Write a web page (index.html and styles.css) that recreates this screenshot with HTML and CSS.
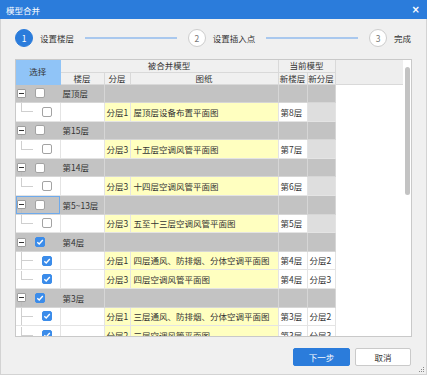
FILE: index.html
```html
<!DOCTYPE html>
<html lang="zh">
  <head>
    <meta charset="UTF-8" />
    <title>模型合并</title>
    <link rel="stylesheet" href="styles.css">
  </head>
  <body>
    <section class="dialog">
      <header class="titlebar">
        <span class="title">模型合并</span>
        <span class="close">×</span>
      </header>

      <div class="dialog-body">
        <nav class="steps">
          <span class="step-num active">1</span>
          <span class="step-text">设置楼层</span>
          <span class="step-line"></span>
          <span class="step-num">2</span>
          <span class="step-text">设置插入点</span>
          <span class="step-line"></span>
          <span class="step-num">3</span>
          <span class="step-text">完成</span>
        </nav>

        <div class="grid-box">
          <div class="grid-scroll">
            <table class="grid">
              <colgroup>
                <col class="c-sel">
                <col class="c-floor">
                <col class="c-layer">
                <col class="c-draw">
                <col class="c-nfloor">
                <col class="c-nlayer">
                <col>
              </colgroup>
              <thead>
                <tr>
                  <th rowspan="2" class="sel-head">选择</th>
                  <th colspan="3">被合并模型</th>
                  <th colspan="2">当前模型</th>
                  <th rowspan="2" class="filler"></th>
                </tr>
                <tr>
                  <th>楼层</th>
                  <th>分层</th>
                  <th>图纸</th>
                  <th>新楼层</th>
                  <th>新分层</th>
                </tr>
              </thead>
              <tbody>
                <tr class="group">
                  <td class="sel"><div class="node"><span class="toggle"></span><span class="cb"></span></div></td>
                  <td class="floor">屋顶层</td><td colspan="2"></td><td></td><td></td><td class="filler"></td>
                </tr>
                <tr class="child">
                  <td class="sel"><div class="leaf"><span class="branch"></span><span class="cb"></span></div></td>
                  <td></td><td class="y">分层1</td><td class="y draw">屋顶层设备布置平面图</td><td class="nf">第8层</td><td class="empty"></td><td class="filler"></td>
                </tr>
                <tr class="group">
                  <td class="sel"><div class="node"><span class="toggle"></span><span class="cb"></span></div></td>
                  <td class="floor">第15层</td><td colspan="2"></td><td></td><td></td><td class="filler"></td>
                </tr>
                <tr class="child">
                  <td class="sel"><div class="leaf"><span class="branch"></span><span class="cb"></span></div></td>
                  <td></td><td class="y">分层3</td><td class="y draw">十五层空调风管平面图</td><td class="nf">第7层</td><td class="empty"></td><td class="filler"></td>
                </tr>
                <tr class="group">
                  <td class="sel"><div class="node"><span class="toggle"></span><span class="cb"></span></div></td>
                  <td class="floor">第14层</td><td colspan="2"></td><td></td><td></td><td class="filler"></td>
                </tr>
                <tr class="child">
                  <td class="sel"><div class="leaf"><span class="branch"></span><span class="cb"></span></div></td>
                  <td></td><td class="y">分层3</td><td class="y draw">十四层空调风管平面图</td><td class="nf">第6层</td><td class="empty"></td><td class="filler"></td>
                </tr>
                <tr class="group">
                  <td class="sel focus"><div class="node"><span class="toggle"></span><span class="cb"></span></div></td>
                  <td class="floor">第5~13层</td><td colspan="2"></td><td></td><td></td><td class="filler"></td>
                </tr>
                <tr class="child">
                  <td class="sel"><div class="leaf"><span class="branch"></span><span class="cb"></span></div></td>
                  <td></td><td class="y">分层3</td><td class="y draw">五至十三层空调风管平面图</td><td class="nf">第5层</td><td class="empty"></td><td class="filler"></td>
                </tr>
                <tr class="group">
                  <td class="sel"><div class="node"><span class="toggle"></span><span class="cb on"></span></div></td>
                  <td class="floor">第4层</td><td colspan="2"></td><td></td><td></td><td class="filler"></td>
                </tr>
                <tr class="child">
                  <td class="sel"><div class="leaf"><span class="branch more"></span><span class="cb on"></span></div></td>
                  <td></td><td class="y">分层1</td><td class="y draw">四层通风、防排烟、分体空调平面图</td><td class="nf">第4层</td><td class="nf">分层2</td><td class="filler"></td>
                </tr>
                <tr class="child">
                  <td class="sel"><div class="leaf"><span class="branch"></span><span class="cb on"></span></div></td>
                  <td></td><td class="y">分层3</td><td class="y draw">四层空调风管平面图</td><td class="nf">第4层</td><td class="nf">分层3</td><td class="filler"></td>
                </tr>
                <tr class="group">
                  <td class="sel"><div class="node"><span class="toggle"></span><span class="cb on"></span></div></td>
                  <td class="floor">第3层</td><td colspan="2"></td><td></td><td></td><td class="filler"></td>
                </tr>
                <tr class="child">
                  <td class="sel"><div class="leaf"><span class="branch more"></span><span class="cb on"></span></div></td>
                  <td></td><td class="y">分层1</td><td class="y draw">三层通风、防排烟、分体空调平面图</td><td class="nf">第3层</td><td class="nf">分层2</td><td class="filler"></td>
                </tr>
                <tr class="child">
                  <td class="sel"><div class="leaf"><span class="branch"></span><span class="cb on"></span></div></td>
                  <td></td><td class="y">分层2</td><td class="y draw">三层空调风管平面图</td><td class="nf">第3层</td><td class="nf">分层3</td><td class="filler"></td>
                </tr>
              </tbody>
            </table>
          </div>
          <div class="scrollbar"><span class="thumb"></span></div>
        </div>

        <footer class="actions">
          <button class="btn primary">下一步</button>
          <button class="btn">取消</button>
        </footer>

        <svg class="grip" width="7" height="7" viewBox="0 0 7 7">
          <rect x="5" y="1" width="1" height="1" fill="#8a8a8a" />
          <rect x="3" y="3" width="1" height="1" fill="#8a8a8a" />
          <rect x="5" y="3" width="1" height="1" fill="#8a8a8a" />
          <rect x="1" y="5" width="1" height="1" fill="#8a8a8a" />
          <rect x="3" y="5" width="1" height="1" fill="#8a8a8a" />
          <rect x="5" y="5" width="1" height="1" fill="#8a8a8a" />
        </svg>
      </div>
    </section>
  </body>
</html>
```

FILE: styles.css
```css
* {
  box-sizing: border-box;
}

body {
  margin: 0;
  font-family: "Noto Sans CJK SC", "Microsoft YaHei", sans-serif;
  font-size: 8.5px;
  color: #333;
  background: #fff;
}

.dialog {
  width: 427px;
  height: 375px;
  display: flex;
  flex-direction: column;
}

.titlebar {
  height: 19px;
  background: #2b7cdb;
  color: #fff;
  display: flex;
  align-items: center;
  justify-content: space-between;
  padding: 0 7px 0 6px;
}

.close {
  font-family: "DejaVu Sans", sans-serif;
  font-size: 10px;
  font-weight: bold;
}

.dialog-body {
  position: relative;
  flex: 1;
  background: #f0f0f0;
  border: 1px solid #d3d3d3;
  border-top: 0;
}

/* steps */
.steps {
  display: flex;
  align-items: center;
  height: 40px;
  padding: 0 15px 2px 14px;
}

.step-num {
  width: 18px;
  height: 18px;
  border-radius: 50%;
  border: 1px solid #cdcdcd;
  background: #fff;
  color: #777;
  display: flex;
  align-items: center;
  justify-content: center;
  flex: none;
}

.step-num.active {
  background: #2b7cdb;
  border-color: #2b7cdb;
  color: #fff;
}

.step-text {
  margin-left: 7px;
  color: #333;
}

.step-line {
  flex: 1;
  height: 2px;
  background: #a9c8ee;
  margin: 0 11px;
}

/* grid */
.grid-box {
  margin-left: 14px;
  width: 397px;
  height: 278px;
  border: 1px solid #c9c9c9;
  background: #fff;
  display: flex;
}

.grid-scroll {
  flex: 1;
  overflow: hidden;
}

.grid {
  border-collapse: collapse;
  table-layout: fixed;
  width: 387px;
}

.c-sel { width: 44px; }
.c-floor { width: 44px; }
.c-layer { width: 26px; }
.c-draw { width: 148px; }
.c-nfloor { width: 29px; }
.c-nlayer { width: 28px; }

.grid th {
  background: #f0f0f0;
  border: 1px solid #d9d9d9;
  font-weight: normal;
  height: 12px;
  padding: 0;
  line-height: 11px;
  color: #333;
  white-space: nowrap;
}

.grid thead tr:first-child th {
  border-top: 0;
}

.grid th.sel-head {
  background: #90c4f7;
  border-left: 0;
  border-color: #90c4f7;
}

.grid th.filler {
  border-right: 0;
  background: #eeeeee;
}

.grid td {
  height: 18.6px;
  padding: 0 0 0 2px;
  border: 1px solid #dcdcdc;
  white-space: nowrap;
  overflow: hidden;
  line-height: 1;
}

.grid td.filler {
  background: #fff;
  border: 0;
}

.grid td.sel {
  padding: 0;
  border-left: 0;
}

.group td {
  background: #c3c3c3;
  border-color: #d6d6d6;
}

.group td.sel {
  border-right-color: #c3c3c3;
}

.child td {
  background: #fff;
  border-color: #e4e4e4;
}

.child td.y {
  background: #ffffc0;
}

.child td.draw {
  padding-left: 3px;
}

.child td.empty {
  background: #dedede;
}

.grid td.focus {
  box-shadow: inset 0 0 0 1px #6eaaec;
}

/* tree */
.node,
.leaf {
  height: 17px;
  display: flex;
  align-items: center;
}

.node {
  padding-left: 1px;
  background: linear-gradient(#bdbdbd, #bdbdbd) 5px 100% / 1px 50% no-repeat;
}

.toggle {
  width: 9px;
  height: 9px;
  border: 1px solid #9d9d9d;
  background: #fff;
  border-radius: 1px;
  display: flex;
  align-items: center;
  justify-content: center;
  margin-right: 9px;
}

.toggle::before {
  content: "";
  width: 5px;
  height: 1px;
  background: #333;
}

.branch {
  align-self: stretch;
  width: 12px;
  margin-left: 5px;
  margin-right: 9px;
  background:
    linear-gradient(#cfcfcf, #cfcfcf) 0 0 / 1px 50% no-repeat,
    linear-gradient(#cfcfcf, #cfcfcf) 0 50% / 100% 1px no-repeat;
}

.branch.more {
  background:
    linear-gradient(#cfcfcf, #cfcfcf) 0 0 / 1px 100% no-repeat,
    linear-gradient(#cfcfcf, #cfcfcf) 0 50% / 100% 1px no-repeat;
}

.cb {
  width: 10px;
  height: 10px;
  border: 1px solid #a3a3a3;
  border-radius: 2px;
  background: #fff;
  flex: none;
}

.cb.on {
  border-color: #3b8cea;
  background: #3b8cea url("data:image/svg+xml,%3Csvg xmlns='http://www.w3.org/2000/svg' width='8' height='8' viewBox='0 0 8 8'%3E%3Cpolyline points='1.3,4.2 3.2,6 6.8,2' fill='none' stroke='white' stroke-width='1.4'/%3E%3C/svg%3E") center / 8px 8px no-repeat;
}

/* scrollbar */
.scrollbar {
  width: 8px;
  flex: none;
  padding: 7px 0 0 2px;
}

.thumb {
  display: block;
  width: 5px;
  height: 128px;
  border-radius: 3px;
  background: #c3c3c3;
}

/* footer */
.actions {
  display: flex;
  justify-content: flex-end;
  gap: 5px;
  padding-right: 15px;
  margin-top: 11px;
}

.btn {
  height: 18px;
  width: 56px;
  font-family: inherit;
  font-size: 8.5px;
  color: #333;
  background: #fff;
  border: 1px solid #cacaca;
  border-radius: 2px;
  padding: 0;
}

.btn.primary {
  width: 57px;
  background: #2b7cdb;
  border-color: #2b7cdb;
  color: #fff;
}

.grip {
  position: absolute;
  right: 1px;
  bottom: 1px;
}
```
